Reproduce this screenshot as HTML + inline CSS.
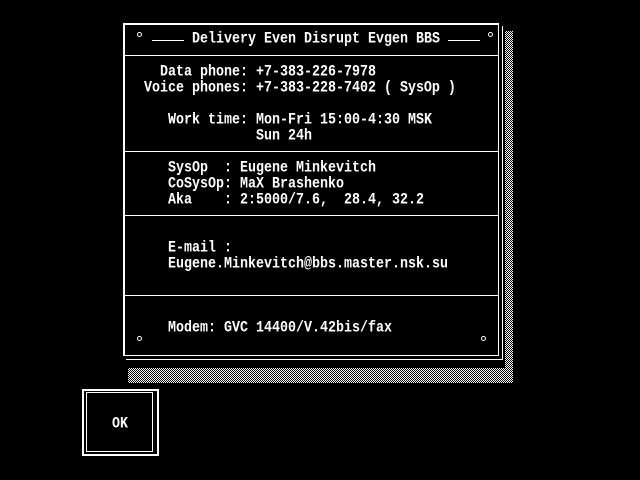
<!DOCTYPE html>
<html><head><style>
body{margin:0;width:640px;height:480px;background:#000;position:relative;overflow:hidden;font-family:"Liberation Mono",monospace;font-size:13.33px;font-weight:bold;color:#fff}
.a{position:absolute}
.t{position:absolute;white-space:pre;line-height:16px;height:16px;transform:translateY(2px) scaleY(1.2);transform-origin:0 50%}
.sh{background:repeating-conic-gradient(#fff 0 25%,#000 0 50%) 0 0/2px 2px}
.h{position:absolute;height:1px;background:#fff;left:124px;width:375px}
.c{position:absolute;width:3px;height:3px;border:1px solid #fff;border-radius:50%}
</style></head><body>
<div class="a sh" style="left:505px;top:31px;width:8px;height:352px"></div>
<div class="a sh" style="left:128px;top:368px;width:385px;height:15px"></div>
<div class="a" style="left:123px;top:23px;width:376px;height:333px;box-sizing:border-box;border:2px solid #fff;border-right-width:1px;border-bottom-width:1px"></div>
<div class="a" style="left:126px;top:26px;width:377px;height:334px;box-sizing:border-box;border-right:1px solid #fff;border-bottom:1px solid #fff"></div>
<div class="h" style="top:55px"></div>
<div class="h" style="top:151px"></div>
<div class="h" style="top:215px"></div>
<div class="h" style="top:295px"></div>
<div class="c" style="left:137px;top:32px"></div>
<div class="c" style="left:488px;top:32px"></div>
<div class="a" style="left:152px;top:40px;width:32px;height:1px;background:#fff"></div>
<div class="a" style="left:448px;top:40px;width:32px;height:1px;background:#fff"></div>
<div class="t" style="left:192px;top:30px">Delivery Even Disrupt Evgen BBS</div>
<div class="t" style="left:160px;top:63px">Data phone: +7-383-226-7978</div>
<div class="t" style="left:144px;top:79px">Voice phones: +7-383-228-7402 ( SysOp )</div>
<div class="t" style="left:168px;top:111px">Work time: Mon-Fri 15:00-4:30 MSK</div>
<div class="t" style="left:256px;top:127px">Sun 24h</div>
<div class="t" style="left:168px;top:159px">SysOp  : Eugene Minkevitch</div>
<div class="t" style="left:168px;top:175px">CoSysOp: MaX Brashenko</div>
<div class="t" style="left:168px;top:191px">Aka    : 2:5000/7.6,  28.4, 32.2</div>
<div class="t" style="left:168px;top:239px">E-mail :</div>
<div class="t" style="left:168px;top:255px">Eugene.Minkevitch@bbs.master.nsk.su</div>
<div class="t" style="left:168px;top:319px">Modem: GVC 14400/V.42bis/fax</div>
<div class="c" style="left:137px;top:336px"></div>
<div class="c" style="left:481px;top:336px"></div>
<div class="a" style="left:82px;top:389px;width:77px;height:67px;box-sizing:border-box;border:2px solid #fff"></div>
<div class="a" style="left:86px;top:392px;width:67px;height:60px;box-sizing:border-box;border:1px solid #fff"></div>
<div class="t" style="left:112px;top:415px">OK</div>
</body></html>
